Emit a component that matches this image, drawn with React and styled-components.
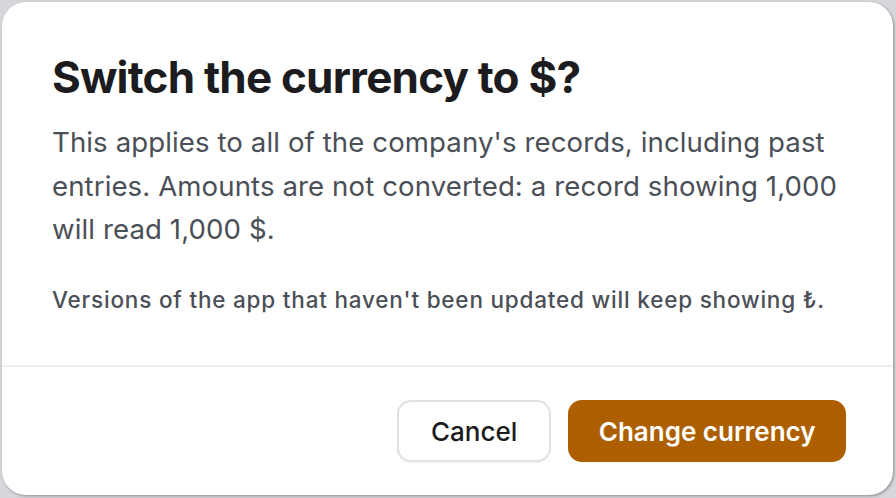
import styled, { createGlobalStyle } from "styled-components";

const Global = createGlobalStyle`
  html, body {
    margin: 0;
    padding: 0;
    background: #d7d7db;
  }
  body {
    font-family: Inter, "Noto Sans", sans-serif;
    -webkit-font-smoothing: antialiased;
  }
`;

const Backdrop = styled.div`
  height: 498px;
  box-sizing: border-box;
  padding: 2px 3px 3px 2px;
  display: flex;
`;

const Dialog = styled.div`
  flex: 1;
  display: flex;
  flex-direction: column;
  background: #ffffff;
  border-radius: 24px;
  box-shadow: 1px 1px 3px rgba(0, 0, 0, 0.35);
  overflow: hidden;
`;

const Body = styled.div`
  flex: 1;
  padding: 48px 46px 0 50px;
  display: flex;
  flex-direction: column;
`;

const Title = styled.h2`
  margin: 0 0 17px;
  font-size: 44px;
  line-height: 54px;
  font-weight: 700;
  letter-spacing: -0.8px;
  color: #1c1c20;
`;

const Text = styled.p`
  margin: 0;
  font-size: 27.6px;
  line-height: 43.5px;
  font-weight: 400;
  letter-spacing: 0.1px;
  color: #4b4f57;
`;

const Note = styled.p`
  margin: 33px 0 0;
  font-size: 22.5px;
  line-height: 30px;
  font-weight: 500;
  letter-spacing: 0.8px;
  color: #4b4f57;
`;

const Footer = styled.div`
  border-top: 2px solid #efefef;
  padding: 33px 47px 33px;
  display: flex;
  justify-content: flex-end;
  gap: 17px;
`;

const Button = styled.button`
  height: 62px;
  padding: 0 ${(p) => (p.$primary ? "30.5px" : "32px")};
  border-radius: 14px;
  font-family: Inter, "Noto Sans", sans-serif;
  font-size: 26px;
  font-weight: ${(p) => (p.$primary ? 600 : 500)};
  cursor: pointer;
  border: ${(p) => (p.$primary ? "none" : "2px solid #e1e1e6")};
  background: ${(p) => (p.$primary ? "#ad5f00" : "#ffffff")};
  color: ${(p) => (p.$primary ? "#ffffff" : "#1c1c20")};
  box-shadow: ${(p) => (p.$primary ? "none" : "0 1px 2px rgba(0,0,0,0.06)")};
`;

export default function App() {
  return (
    <>
      <Global />
      <Backdrop>
        <Dialog>
          <Body>
            <Title>Switch the currency to $?</Title>
            <Text>
              This applies to all of the company's records, including past
              entries. Amounts are not converted: a record showing 1,000 will
              read 1,000 $.
            </Text>
            <Note>
              Versions of the app that haven't been updated will keep showing ₺.
            </Note>
          </Body>
          <Footer>
            <Button>Cancel</Button>
            <Button $primary>Change currency</Button>
          </Footer>
        </Dialog>
      </Backdrop>
    </>
  );
}
